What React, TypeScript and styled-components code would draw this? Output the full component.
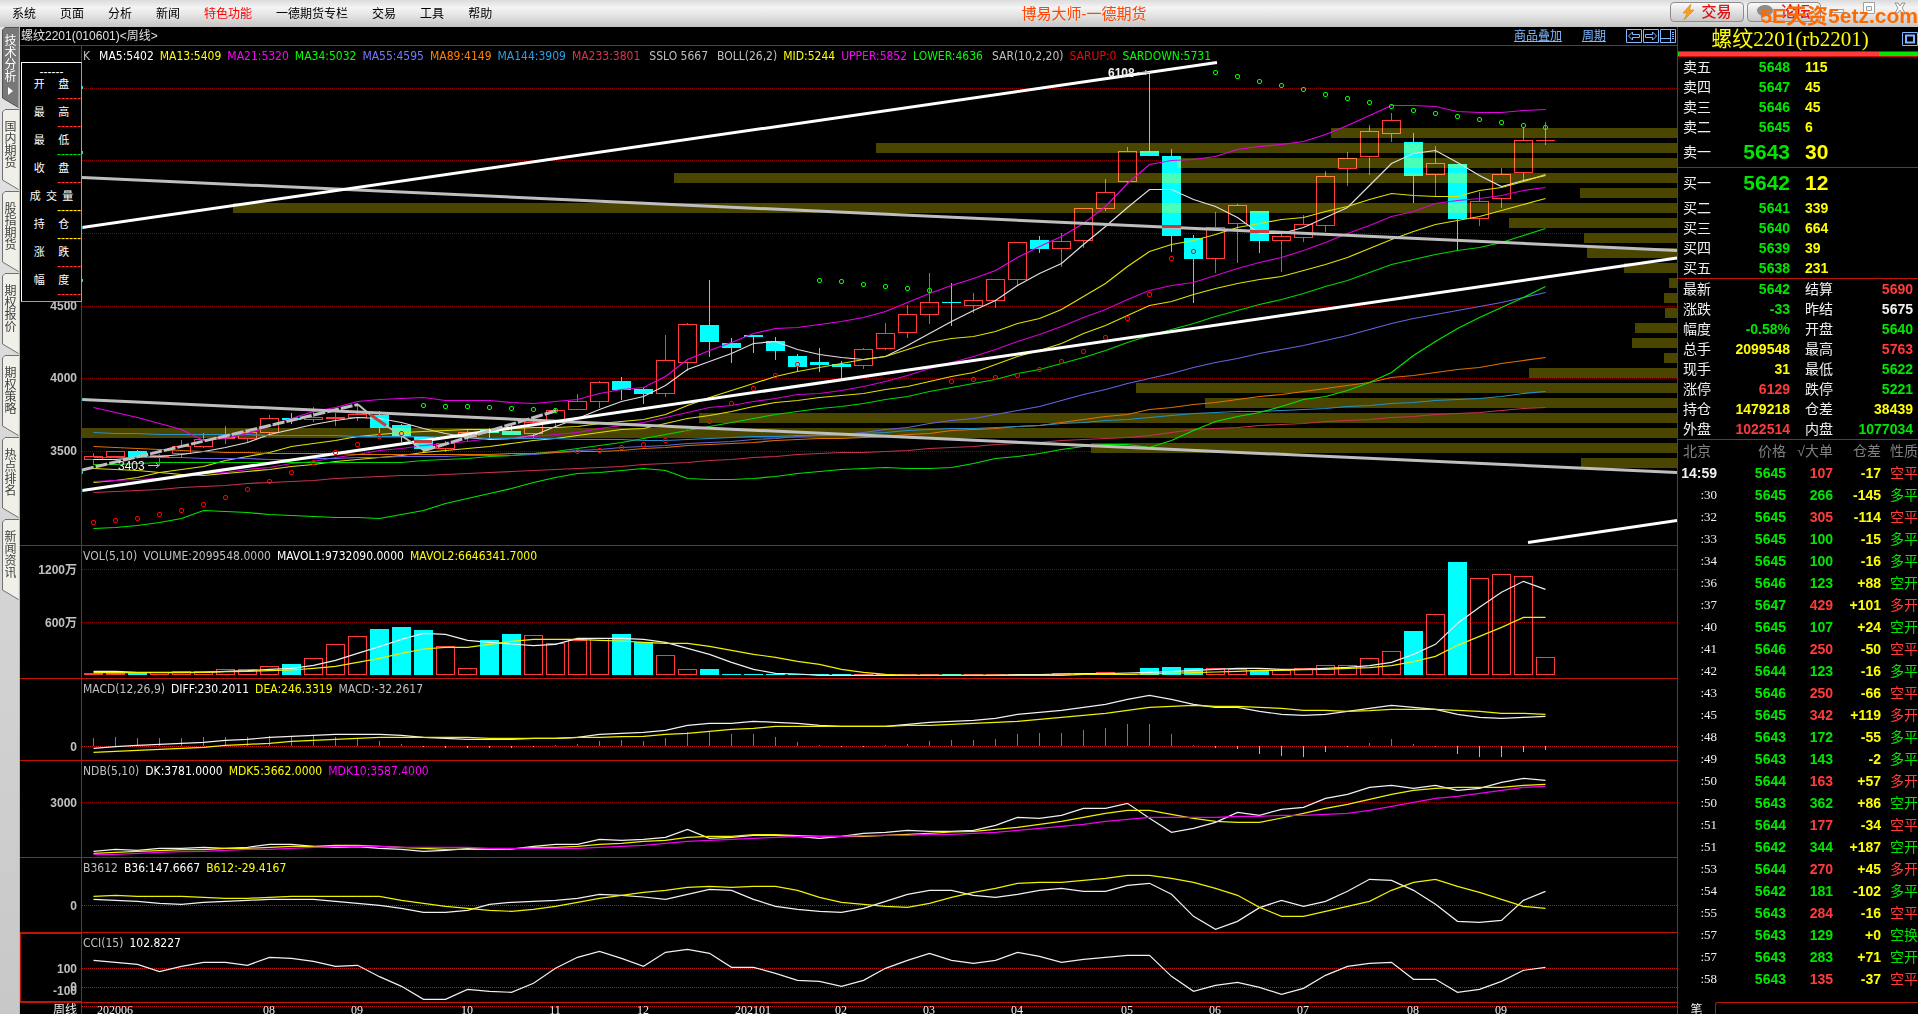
import React from 'react';
import styled, { createGlobalStyle, css } from 'styled-components';

/* ---------- theme ---------- */

const C = {
  frame: '#c01408',
  grid: '#8c0000',
  gridBright: '#c81414',
  red: '#ff3b3b',
  green: '#00e600',
  yellow: '#ffff00',
  cyan: '#00ffff',
  magenta: '#e600e6',
  white: '#f0f0f0',
  grey: '#c0c0c0',
  link: '#7fb8ff',
  band: '#4a4600',
};

const UI_FONT = `'Liberation Sans', 'Noto Sans CJK SC', sans-serif`;
const LEGEND_FONT = `'DejaVu Sans Condensed', 'Noto Sans CJK SC', sans-serif`;
const SONG_FONT = `'Liberation Serif', 'Noto Sans CJK SC', serif`;

const GlobalStyle = createGlobalStyle`
  * { box-sizing: border-box; }
  body {
    margin: 0;
    background: #000;
    color: ${C.white};
    font-family: ${UI_FONT};
    font-size: 12px;
    overflow: hidden;
  }
  button {
    margin: 0;
    padding: 0;
    border: 0;
    background: none;
    font: inherit;
    color: inherit;
    cursor: pointer;
  }
`;

/* ---------- chart data ---------- */

type Candle = [up: number, top: number, bottom: number, high: number, low: number];

const CANDLES: Candle[] = [
  [1, 456, 459, 453, 464], [1, 451, 456, 451, 457], [0, 451, 456, 450, 458], [1, 455, 456, 454, 465],
  [1, 446, 453, 440, 457], [1, 439, 446, 433, 447], [1, 437, 438, 426, 443], [1, 432, 438, 431, 442],
  [1, 418, 432, 415, 434], [0, 418, 419, 413, 424], [1, 417, 419, 407, 421], [1, 417, 418, 413, 425],
  [1, 414, 417, 405, 420], [0, 415, 427, 411, 433], [0, 425, 436, 424, 442], [0, 437, 448, 436, 452],
  [1, 443, 448, 441, 451], [1, 432, 436, 429, 440], [0, 429, 432, 428, 439], [0, 431, 434, 425, 435],
  [1, 422, 433, 420, 437], [1, 410, 421, 408, 426], [1, 401, 409, 394, 409], [1, 382, 401, 381, 407],
  [0, 381, 389, 377, 400], [0, 389, 393, 387, 404], [1, 360, 393, 335, 396], [1, 324, 362, 323, 370],
  [0, 325, 341, 280, 357], [0, 343, 347, 338, 363], [0, 335, 336, 335, 353], [0, 341, 350, 337, 360],
  [0, 356, 366, 354, 371], [0, 362, 364, 348, 372], [0, 364, 366, 361, 381], [1, 349, 365, 348, 368],
  [1, 333, 348, 323, 349], [1, 314, 332, 305, 337], [1, 302, 314, 273, 323], [0, 302, 302, 283, 326],
  [1, 300, 305, 293, 312], [1, 279, 300, 279, 307], [1, 242, 279, 242, 285], [0, 240, 248, 236, 253],
  [1, 241, 248, 233, 266], [1, 208, 240, 208, 247], [1, 192, 208, 179, 210], [1, 151, 181, 147, 182],
  [0, 151, 155, 72, 156], [0, 156, 235, 149, 252], [0, 238, 258, 235, 303], [1, 227, 258, 212, 272],
  [1, 205, 223, 204, 262], [0, 211, 240, 211, 253], [1, 236, 240, 233, 271], [1, 224, 237, 215, 241],
  [1, 176, 225, 171, 231], [1, 158, 168, 152, 185], [1, 131, 156, 125, 174], [1, 120, 133, 113, 141],
  [0, 142, 175, 133, 203], [1, 163, 174, 146, 195], [0, 164, 218, 164, 250], [1, 201, 218, 192, 225],
  [1, 174, 198, 168, 207], [1, 140, 172, 127, 180], [1, 140, 140, 122, 144],
];

const VOLUME_TOPS = nums(
  '673 673 673 672 671 671 669 669 666 664 658 644 636 629 627 630 646 668 640 634 635 643 640 638 634 642 655 669 669 674 674 674 674 674 674 674 674 674 674 674 674 674 674 674 673 673 672 674 668 667 668 668 669 670 670 668 665 665 658 651 631 614 562 578 574 576 657',
);

/* volume profile: [y, left edge], ten units tall each, always reaching the right border */
const BANDS: [number, number][] = [
  [128, 1331], [143, 876], [158, 1177], [173, 674], [188, 1580], [203, 233], [218, 1509], [233, 1584],
  [248, 1587], [263, 1624], [278, 1669], [293, 1664], [308, 1665], [323, 1635], [338, 1632], [353, 1664],
  [368, 1529], [383, 1136], [398, 1205], [413, 699], [428, 82], [443, 1091], [458, 1581],
];

const MAIN_LINES: { color: string; ys: number[] }[] = [
  { color: '#e0e0e0', ys: nums('459 459 457 456 454 451 447 442 434 429 424 420 417 418 422 428 433 437 439 438 435 426 418 409 401 396 385 369 361 353 343 341 349 354 357 359 356 345 333 321 310 300 285 273 263 244 226 207 189 189 199 206 217 233 233 227 217 207 185 163 153 150 162 175 186 180 175') },
  { color: '#e0e000', ys: nums('482 480 477 472 469 466 460 456 452 446 443 440 436 434 432 431 430 429 429 428 427 427 426 423 421 419 414 405 397 390 383 376 371 367 363 359 356 349 342 338 336 331 323 318 309 296 283 266 251 244 240 234 227 223 219 217 211 206 199 193 195 196 196 190 187 181 174') },
  { color: '#d800d8', ys: nums('481 480 479 478 476 473 472 469 467 463 461 457 454 450 448 445 443 441 438 437 436 434 432 428 425 422 417 412 407 405 401 398 394 393 390 386 381 375 368 362 356 349 341 334 326 317 309 299 290 285 282 275 268 262 257 250 242 233 225 216 211 203 200 198 195 190 187') },
  { color: '#e0e000', ys: nums('468 469 470 472 474 475 473 471 469 466 464 461 459 457 455 452 450 448 446 443 440 438 435 432 429 428 423 418 415 411 406 402 400 397 395 393 389 386 381 376 372 364 356 350 343 333 325 315 305 301 294 288 283 279 276 270 264 257 248 239 231 224 220 216 210 204 198') },
  { color: '#00d800', ys: nums('464 464 463 462 462 462 462 462 462 462 462 462 462 462 462 460 459 458 456 455 453 451 448 445 442 438 434 430 426 422 418 414 411 408 406 403 399 396 391 387 383 379 373 369 363 357 350 342 335 329 323 316 310 304 299 293 286 280 272 264 259 254 250 247 242 235 228') },
  { color: '#6464e0', ys: nums('457 457 457 457 457 458 458 458 459 459 458 458 457 457 456 456 456 455 455 455 454 452 450 449 447 446 445 443 442 441 439 438 436 435 434 432 429 427 423 420 418 414 410 406 400 394 389 383 378 373 367 362 358 353 349 345 340 335 329 323 318 314 310 306 302 297 292') },
  { color: '#e07000', ys: nums('446 447 448 449 450 451 452 452 453 453 453 453 454 454 454 454 454 454 454 453 453 452 451 451 450 448 447 445 444 443 442 440 439 438 438 437 436 434 433 430 429 428 426 425 422 419 416 414 409 407 404 402 399 396 394 391 388 385 382 377 375 372 369 367 363 360 357') },
  { color: '#2890c8', ys: nums('432 433 433 434 434 434 434 434 435 435 435 435 436 436 436 436 437 437 438 438 438 438 439 439 439 440 440 439 438 437 436 436 435 435 434 433 432 430 429 428 428 427 426 425 423 422 420 419 417 415 413 412 411 411 410 409 408 406 405 403 402 400 399 398 396 393 391') },
  { color: '#c83250', ys: nums('492 491 490 489 487 486 485 483 482 481 480 478 477 476 475 475 474 473 472 471 470 469 468 467 466 464 463 462 460 459 457 456 454 453 452 452 451 450 448 447 446 444 443 442 440 439 438 437 435 432 429 428 427 425 424 423 421 420 419 417 416 414 413 412 410 408 407') },
  { color: '#e600e6', ys: nums('407 412 417 423 429 440 438 433 426 418 411 407 401 399 398 397 400 400 400 402 403 401 399 393 389 387 376 359 350 342 333 328 327 324 321 317 311 302 293 285 278 270 257 246 236 223 206 183 164 160 159 156 149 146 144 141 134 125 115 105 105 106 111 112 112 110 109') },
  { color: '#00e600', ys: nums('528 527 525 522 518 510 511 512 514 515 516 517 517 518 514 510 503 498 493 488 482 477 473 472 470 468 470 478 479 479 478 476 473 471 469 468 467 468 468 467 463 458 456 453 449 446 444 444 447 440 430 421 416 412 406 399 396 390 382 372 355 341 328 317 307 297 286') },
];

/* SAR: [first bar, colour, heights] */
const SAR: [number, string, number[]][] = [
  [0, '#ff0000', nums('522 520 518 514 510 504 497 489 481 472 462 452 444 436 433')],
  [15, '#00ff00', nums('405 406 406 407 408 409 410')],
  [22, '#ff0000', nums('451 450 447 444 440 431 421 403 388 375 364')],
  [33, '#00ff00', nums('280 281 284 286 288 290')],
  [39, '#ff0000', nums('381 379 377 375 369 361 351 337 318 294 258 251')],
  [51, '#00ff00', nums('72 76 81 85 89 94 98 102 106 110 113 116 119 122 125 127')],
];

const MAVOL = [
  nums('394 394 397 397 397 397 394 392 388 385 376 361 340 320 298 280 283 301 307 312 317 313 295 295 295 298 307 325 343 367 388 400 402 406 406 406 406 406 406 406 406 406 404 404 402 401 401 399 397 395 391 388 385 385 388 388 385 382 377 367 343 313 250 202 157 124 148'),
  nums('398 398 398 398 398 397 395 394 392 390 385 379 367 355 340 327 322 322 313 304 298 298 298 301 303 307 310 310 319 331 343 352 364 373 388 397 403 406 406 406 406 406 406 406 406 403 403 403 402 400 398 396 394 391 391 389 388 385 383 377 365 349 316 289 262 232 232'),
];
const DIFF = nums('625 620 616 613 610 607 601 598 592 589 586 583 583 583 586 592 595 598 598 598 595 595 592 583 580 577 571 556 550 550 544 547 550 556 559 559 559 553 547 544 541 535 523 517 511 502 493 478 466 478 493 502 502 514 523 526 523 514 505 496 502 508 523 532 535 532 529');
const DEA = nums('637 634 631 628 625 622 616 613 610 604 601 598 595 592 592 592 592 592 595 595 595 595 592 592 590 589 583 580 574 568 565 559 559 559 559 559 559 556 556 553 550 547 544 538 532 526 520 511 502 499 496 499 499 502 505 511 511 514 512 508 508 508 511 514 520 520 523');
const HIST = nums('594 591 594 594 594 591 591 591 588 588 588 591 594 603 612 622 624 624 624 624 622 616 612 603 600 603 594 576 574 582 582 591 606 615 622 622 616 612 603 600 600 597 582 579 579 570 564 552 552 582 615 624 627 642 648 651 636 622 609 597 612 617 642 651 651 636 630');
const NDB = [
  nums('934 928 931 925 925 922 925 922 913 913 919 922 920 925 928 934 931 926 928 927 919 913 913 898 901 898 892 868 895 892 886 886 889 895 889 880 877 871 874 874 871 856 832 835 826 805 805 790 835 877 865 847 817 826 808 802 775 763 742 736 745 736 751 745 727 715 721'),
  nums('940 937 934 932 929 929 925 925 922 919 919 916 916 919 922 925 928 928 928 927 922 922 919 913 910 904 901 892 889 889 884 884 887 889 889 889 886 883 880 876 874 868 862 853 844 832 820 811 811 823 835 844 847 847 834 820 805 793 778 763 751 745 742 742 742 736 733'),
  nums('943 943 940 937 935 934 931 928 928 925 922 920 919 919 922 922 922 922 925 925 925 925 925 922 919 916 910 904 901 898 895 892 890 889 889 887 886 886 883 883 880 877 871 865 859 853 844 838 832 832 832 832 829 829 826 826 823 820 811 799 787 775 769 760 751 742 739'),
];
const B3612 = [
  nums('1078 1081 1084 1090 1093 1087 1084 1081 1078 1078 1078 1084 1090 1096 1105 1117 1117 1111 1093 1087 1084 1081 1075 1063 1066 1071 1078 1063 1048 1051 1078 1099 1108 1114 1117 1105 1084 1063 1051 1051 1066 1072 1063 1051 1045 1054 1054 1036 1030 1063 1129 1168 1144 1103 1081 1099 1084 1054 1018 1021 1051 1093 1144 1147 1141 1081 1054'),
  nums('1069 1066 1069 1069 1069 1072 1075 1075 1072 1069 1069 1069 1069 1069 1081 1090 1099 1105 1111 1114 1108 1099 1087 1075 1066 1057 1051 1042 1039 1042 1039 1039 1051 1072 1087 1093 1099 1102 1090 1072 1057 1045 1030 1027 1027 1021 1015 1006 1006 1015 1027 1045 1066 1102 1129 1129 1114 1099 1084 1051 1027 1018 1039 1057 1078 1099 1105'),
];
const CCI = nums('1261 1267 1273 1295 1279 1267 1267 1276 1252 1255 1264 1279 1276 1310 1339 1378 1378 1348 1354 1357 1330 1285 1252 1234 1255 1279 1237 1228 1240 1282 1282 1300 1321 1324 1339 1321 1285 1261 1240 1261 1270 1261 1237 1249 1267 1258 1252 1246 1246 1309 1354 1336 1327 1342 1363 1345 1306 1279 1270 1267 1318 1318 1357 1348 1324 1291 1282');

const DATES: [number, string][] = [
  [1, '202006'], [8, '08'], [12, '09'], [17, '10'], [21, '11'], [25, '12'], [30, '202101'], [34, '02'],
  [38, '03'], [42, '04'], [47, '05'], [51, '06'], [55, '07'], [60, '08'], [64, '09'],
];

/* ---------- chart helpers ---------- */

const LEFT = 82;
const WIDTH = 1595;
const BAR = 22;

function nums(text: string): number[] {
  return text.split(' ').map(Number);
}
const barX = (i: number) => 93 + BAR * i;
const subY = (v: number) => 540 + v / 3;

/* ---------- page frame ---------- */

const Page = styled.div`
  display: flex;
  flex-direction: column;
  height: 100vh;
  overflow: hidden;
`;

const Header = styled.header`
  display: flex;
  align-items: center;
  flex: none;
  height: 27px;
  background: linear-gradient(#dcdcdc, #f4f4f4 28%, #e2e2e2 60%, #c4c4c4);
  color: #000;
`;

const Menu = styled.nav`
  display: flex;
`;

const MenuItem = styled.button<{ $hot?: boolean }>`
  padding: 0 12px;
  line-height: 26px;
  font-size: 12px;
  color: ${(p) => (p.$hot ? '#ff0000' : '#000')};
`;

const AppTitle = styled.h1`
  flex: 1;
  margin: 0;
  padding-right: 6px;
  text-align: center;
  font-size: 15px;
  font-weight: 400;
  line-height: 26px;
  color: #ff4500;
`;

const HeaderTools = styled.div`
  position: relative;
  display: flex;
  align-items: center;
  gap: 3px;
  width: 248px;
  height: 27px;
`;

const PillButton = styled.button`
  display: flex;
  align-items: center;
  justify-content: center;
  gap: 7px;
  width: 74px;
  height: 20px;
  margin-bottom: 3px;
  border: 1px solid #8c8c8c;
  border-radius: 4px;
  background: linear-gradient(#fafafa, #c8c8c8);
  color: #dc1414;
  font-size: 15px;
  font-weight: 500;
  line-height: 18px;
`;

const WindowButton = styled.button`
  display: flex;
  justify-content: center;
  align-items: center;
  width: 28px;
  height: 14px;
  margin-bottom: 12px;
`;

const Watermark = styled.span`
  position: absolute;
  right: 0;
  top: 4px;
  line-height: 24px;
  font-size: 21px;
  font-weight: 700;
  color: #ff6a00;
`;

const Body = styled.div`
  display: flex;
  flex: 1;
  min-height: 0;
`;

/* ---------- side tabs ---------- */

const SideBar = styled.nav`
  display: flex;
  flex-direction: column;
  flex: none;
  gap: 1px;
  width: 20px;
  background: linear-gradient(#e4e4e4, #c8c8c8);
  border-right: 1px solid #b4b4b4;
`;

const SideTab = styled.button<{ $active?: boolean }>`
  display: grid;
  justify-items: center;
  width: 17px;
  height: 81px;
  margin-left: 2px;
  line-height: 12px;
  font-size: 12px;
  color: ${(p) => (p.$active ? '#fff' : '#404040')};
  & > * { grid-area: 1 / 1; }
`;

const TabText = styled.span<{ $active?: boolean }>`
  display: flex;
  flex-direction: column;
  align-items: center;
  width: 12px;
  padding-top: ${(p) => (p.$active ? 8 : 12)}px;
`;

/* ---------- chart column ---------- */

const Charts = styled.main`
  display: grid;
  grid-template-rows: 19px 500fr 133fr 82fr 97fr 75fr 70fr 11px;
  flex: 1;
  min-width: 0;
  position: relative;
`;

const ChartTitle = styled.div`
  display: flex;
  align-items: center;
  gap: 20px;
  padding: 0 1px;
  border-bottom: 1px solid ${C.frame};
  line-height: 18px;
`;

const Instrument = styled.h2`
  flex: 1;
  margin: 0;
  font-size: 12px;
  font-weight: 400;
  color: #e0e0e0;
`;

const ChartLink = styled.a`
  color: ${C.link};
  text-decoration: underline;
`;

const IconRow = styled.span`
  display: flex;
  gap: 1px;
`;

const IconButton = styled.button`
  display: flex;
  width: 16px;
  height: 14px;
`;

const Panel = styled.section`
  display: grid;
  grid-template-columns: 62px 1fr;
  grid-template-rows: minmax(0, 1fr);
  min-height: 0;
  border-bottom: 1px solid ${C.frame};
`;

const Axis = styled.div<{ $selected?: boolean }>`
  min-height: 0;
  border-right: 1px solid ${C.frame};
  ${(p) =>
    p.$selected &&
    css`
      outline: 1px solid ${C.frame};
      outline-offset: -1px;
    `}
`;

const AxisSvg = styled.svg`
  display: block;
  width: 61px;
  height: 100%;
  text {
    font: 700 12px ${UI_FONT};
    fill: ${C.grey};
    text-anchor: end;
    dominant-baseline: central;
  }
`;

const Plot = styled.div`
  display: grid;
  grid-template-rows: minmax(0, 1fr);
  min-height: 0;
  & > * { grid-area: 1 / 1; }
`;

const PlotSvg = styled.svg`
  display: block;
  width: 100%;
  height: 100%;
`;

const Legend = styled.div`
  display: flex;
  align-self: start;
  gap: 6px;
  padding: 2px 0 0 1px;
  font-family: ${LEGEND_FONT};
  font-size: 12px;
  line-height: 16px;
  white-space: pre;
  z-index: 1;
`;

const Value = styled.span<{ $color: string; $lead?: number }>`
  color: ${(p) => p.$color};
  margin-left: ${(p) => p.$lead ?? 0}px;
`;

const TimeAxis = styled.div`
  display: grid;
  grid-template-columns: 62px 1fr;
  line-height: 14px;
  overflow: hidden;
`;

const Period = styled.span`
  padding-right: 4px;
  border-right: 1px solid ${C.frame};
  text-align: right;
  line-height: 14px;
`;

const DateRow = styled.div`
  display: grid;
  grid-template-columns: repeat(145, 1fr);
  font-family: ${SONG_FONT};
  text-align: center;
  background: repeating-linear-gradient(90deg, ${C.gridBright} 0 1px, #000 1px 2px) 0 3px / 100% 1px no-repeat;
`;

const DateMark = styled.span<{ $bar: number }>`
  grid-row: 1;
  grid-column: ${(p) => `${p.$bar * 2} / ${p.$bar * 2 + 4}`};
`;

/* floating readout over the axis */
const Readout = styled.aside`
  position: absolute;
  left: 1px;
  top: 35px;
  width: 61px;
  height: 240px;
  padding-top: 2px;
  border: 1px solid #fff;
  border-right-color: #a0a0a0;
  border-bottom-color: #a0a0a0;
  background: #000;
  z-index: 2;
`;

const ReadoutRow = styled.div`
  height: 28px;
`;

const ReadoutLabel = styled.div`
  display: flex;
  justify-content: space-around;
  padding: 0 5px;
  font-size: 11px;
  line-height: 15px;
  color: #fff;
`;

const ReadoutDash = styled.div<{ $color: string; $mid?: boolean }>`
  font-size: 12px;
  line-height: ${(p) => (p.$mid ? 14 : 13)}px;
  height: ${(p) => (p.$mid ? 12 : 13)}px;
  text-align: ${(p) => (p.$mid ? 'center' : 'right')};
  color: ${(p) => p.$color};
`;

/* ---------- quote column ---------- */

const Quote = styled.aside`
  display: flex;
  flex-direction: column;
  flex: none;
  width: 241px;
  border-left: 1px solid ${C.frame};
`;

const QuoteTitle = styled.div`
  display: flex;
  align-items: center;
  height: 24px;
  h2 {
    flex: 1;
    margin: 0;
    text-align: center;
    font: 400 21px/24px ${SONG_FONT};
    color: ${C.yellow};
  }
`;

const Ratio = styled.div`
  display: grid;
  grid-template-columns: 200fr 39fr;
  height: 6px;
  padding-left: 1px;
  border-top: 1px solid ${C.frame};
  border-bottom: 1px solid ${C.frame};
  background: ${C.green};
  &::before {
    content: '';
    background: ${C.red};
  }
`;

const Block = styled.div`
  border-bottom: 1px solid ${C.frame};
`;

const QuoteRow = styled.div<{ $big?: boolean }>`
  display: grid;
  grid-template-columns: 28px 79px 43px 1fr;
  align-items: center;
  height: ${(p) => (p.$big ? 30 : 20)}px;
  padding: 0 5px;
  font-size: 14px;
  line-height: 20px;
  white-space: nowrap;
  b {
    font-size: ${(p) => (p.$big ? 21 : 14)}px;
  }
`;

const Num = styled.b<{ $color: string; $left?: boolean }>`
  color: ${(p) => p.$color};
  text-align: ${(p) => (p.$left ? 'left' : 'right')};
  padding-left: ${(p) => (p.$left ? 15 : 0)}px;
`;

const SecondLabel = styled.span`
  padding-left: 15px;
`;

const Ticks = styled.table`
  width: 100%;
  border-collapse: collapse;
  table-layout: fixed;
  font-size: 14px;
  line-height: 22px;
  white-space: nowrap;
  th, td {
    height: 22px;
    padding: 0;
    text-align: right;
  }
  th {
    font-weight: 400;
    color: #808080;
  }
  th:first-child {
    padding-left: 5px;
    text-align: left;
  }
  th:last-child, td:last-child {
    padding-left: 9px;
    text-align: left;
  }
`;

const Col = styled.col<{ $w: number }>`
  width: ${(p) => p.$w}px;
`;

const TickTime = styled.td<{ $full?: boolean }>`
  font-family: ${(p) => (p.$full ? UI_FONT : SONG_FONT)};
  font-weight: ${(p) => (p.$full ? 700 : 400)};
  font-size: ${(p) => (p.$full ? 14 : 13)}px;
`;

const TickCell = styled.td<{ $color: string; $bold?: boolean }>`
  color: ${(p) => p.$color};
  font-weight: ${(p) => (p.$bold ? 700 : 400)};
`;

const QuoteFoot = styled.div`
  display: grid;
  grid-template-columns: 37px 1fr;
  height: 12px;
  margin-top: auto;
  overflow: hidden;
  line-height: 16px;
  text-align: center;
`;

const FootTab = styled.div`
  border: 1px solid ${C.frame};
  border-width: 1px 0 0 1px;
  border-top-left-radius: 3px;
`;

/* ---------- chart drawing ---------- */

const Grid = ({ ys, color = C.grid }: { ys: number[]; color?: string }) => (
  <g stroke={color} strokeDasharray="1 1" shapeRendering="crispEdges">
    {ys.map((y) => (
      <line key={y} x1={LEFT} x2={LEFT + WIDTH} y1={y + 0.5} y2={y + 0.5} />
    ))}
  </g>
);

const Series = ({ ys, color }: { ys: number[]; color: string }) => (
  <polyline points={ys.map((y, i) => `${barX(i) + 0.5},${y}`).join(' ')} fill="none" stroke={color} strokeWidth="1.2" />
);

const Bands = ({ fill, clip }: { fill: string; clip?: string }) => (
  <g fill={fill} clipPath={clip}>
    {BANDS.map(([y, x]) => (
      <rect key={y} x={x} y={y} width={LEFT + WIDTH - x} height="10" />
    ))}
  </g>
);

const MainChart = () => {
  const indexed = CANDLES.map((c, i) => ({ c, x: barX(i) }));
  const falling = indexed.filter(({ c }) => !c[0]);
  const rising = indexed.filter(({ c }) => c[0]);
  return (
    <PlotSvg viewBox={`${LEFT} 46 ${WIDTH} 499`} preserveAspectRatio="none" role="img" aria-label="周线 K">
      <defs>
        <clipPath id="falling">
          {falling.map(({ c, x }) => (
            <rect key={x} x={x - 9} y={c[1]} width="19" height={c[2] - c[1] + 1} />
          ))}
        </clipPath>
      </defs>
      <Grid ys={[88, 160, 233, 306, 378, 451]} />
      <Bands fill={C.band} />
      <g stroke={C.red} fill="none" shapeRendering="crispEdges" style={{ mixBlendMode: 'plus-lighter' }}>
        {rising.map(({ c, x }) => (
          <React.Fragment key={x}>
            {c[2] > c[1] ? (
              <rect x={x - 8.5} y={c[1] + 0.5} width="18" height={c[2] - c[1]} />
            ) : (
              <path d={`M${x - 9} ${c[1] + 0.5}h19`} />
            )}
            <path d={`M${x + 0.5} ${c[3]}V${c[1]}M${x + 0.5} ${c[2] + 1}V${c[4] + 1}`} />
          </React.Fragment>
        ))}
      </g>
      <g fill={C.cyan} shapeRendering="crispEdges">
        {falling.map(({ c, x }) => (
          <React.Fragment key={x}>
            <rect x={x - 9} y={c[1]} width="19" height={c[2] - c[1] + 1} />
            <rect x={x} y={c[3]} width="1" height={c[4] - c[3]} />
          </React.Fragment>
        ))}
      </g>
      <Bands fill="#4affb9" clip="url(#falling)" />
      <g transform="translate(0 0.5)">
        {MAIN_LINES.map((l, i) => (
          <Series key={i} ys={l.ys} color={l.color} />
        ))}
      </g>
      <g fill="none" strokeWidth="3">
        <path stroke="#bebebe" d="M82 177.5L1677 250.5M82 399.5L1677 472.5" />
        <path stroke="#fff" d="M82 227.5L1217 62.5M82 490.5L1677 258M1528 542.5L1677 520.5" />
        <path stroke="#bebebe" d="M82 470L358 404.5M424 450.5L557 410.5" strokeDasharray="12 2" />
        <path stroke="#c83c3c" d="M1162 226.500H1181M1250 231.500H1269M370 414.500L386 425.500M414 441.500H432" />
        <path stroke="#bebebe" strokeWidth="2" d="M358 404.500L370 414.500M386 425.500L424 450.500" />
      </g>
      <g fill="none">
        {SAR.map(([first, color, ys]) =>
          ys.map((y, i) => (
            <rect key={`${first}-${i}`} x={barX(first + i) - 1.5} y={y - 1.5} width="4" height="4" rx="1.5" stroke={color} />
          )),
        )}
      </g>
      <g fill="#40c8c8">
        {[87, 152, 227, 280, 399, 472, 490].map((y) => (
          <rect key={y} x="82" y={y - 1} width="1" height="3" />
        ))}
      </g>
      <g fill={C.white} fontFamily="Liberation Sans, sans-serif" fontSize="12" fontWeight="700">
        <text x="1108" y="77">6108</text>
        <text x="118" y="470" fontWeight="400">3403</text>
      </g>
      <path d="M1137 72.500H1150M1145 70L1148 72.500L1145 75M148 465.500H159M156 463L159 465.500L156 468" stroke={C.grey} fill="none" />
    </PlotSvg>
  );
};

const SubSvg = ({ top, height, label, children }: { top: number; height: number; label: string; children: React.ReactNode }) => (
  <PlotSvg viewBox={`${LEFT} ${top} ${WIDTH} ${height}`} preserveAspectRatio="none" role="img" aria-label={label}>
    {children}
  </PlotSvg>
);

const VolumeChart = () => (
  <SubSvg top={546} height={132} label="VOL">
    <Grid ys={[569, 622]} />
    <g shapeRendering="crispEdges">
      {VOLUME_TOPS.map((top, i) =>
        CANDLES[i][0] && top < 674 ? (
          <rect key={i} x={barX(i) - 8.5} y={top + 0.5} width="18" height={674 - top} fill="none" stroke={C.red} />
        ) : (
          <rect key={i} x={barX(i) - 9} y={top} width="19" height={675 - top} fill={CANDLES[i][0] ? C.red : C.cyan} />
        ),
      )}
    </g>
    <Series ys={MAVOL[0].map(subY)} color="#f0f0f0" />
    <Series ys={MAVOL[1].map(subY)} color="#f0f000" />
  </SubSvg>
);

const MacdChart = () => (
  <SubSvg top={679} height={81} label="MACD">
    <Grid ys={[746]} color={C.gridBright} />
    <g shapeRendering="crispEdges">
      {HIST.map((v, i) => {
        const y = Math.round(subY(v));
        return (
          <rect
            key={i}
            x={barX(i)}
            y={Math.min(y, 746)}
            width="1"
            height={Math.max(1, Math.abs(746 - y))}
            fill={v < 619 ? C.red : C.cyan}
          />
        );
      })}
    </g>
    <Series ys={DIFF.map(subY)} color="#f0f0f0" />
    <Series ys={DEA.map(subY)} color="#f0f000" />
  </SubSvg>
);

const Ticker = ({ top, height, marks }: { top: number; height: number; marks: [number, string][] }) => (
  <AxisSvg>
    {marks.map(([y, text]) => (
      <text key={text} x="57" y={`${((y - top) / height) * 100}%`}>
        {text}
      </text>
    ))}
  </AxisSvg>
);

const LegendRow = ({ items }: { items: [string, string, number?][] }) => (
  <Legend>
    {items.map(([text, color, lead]) => (
      <Value key={text} $color={color} $lead={lead}>
        {text}
      </Value>
    ))}
  </Legend>
);

/* ---------- quote data ---------- */

const ASKS = [['卖五', '5648', '115'], ['卖四', '5647', '45'], ['卖三', '5646', '45'], ['卖二', '5645', '6'], ['卖一', '5643', '30']];
const BIDS = [['买一', '5642', '12'], ['买二', '5641', '339'], ['买三', '5640', '664'], ['买四', '5639', '39'], ['买五', '5638', '231']];

const STATS: [string, string, string, string, string, string][] = [
  ['最新', '5642', C.green, '结算', '5690', C.red],
  ['涨跌', '-33', C.green, '昨结', '5675', C.white],
  ['幅度', '-0.58%', C.green, '开盘', '5640', C.green],
  ['总手', '2099548', C.yellow, '最高', '5763', C.red],
  ['现手', '31', C.yellow, '最低', '5622', C.green],
  ['涨停', '6129', C.red, '跌停', '5221', C.green],
  ['持仓', '1479218', C.yellow, '仓差', '38439', C.yellow],
  ['外盘', '1022514', C.red, '内盘', '1077034', C.green],
];

const TICKS: [string, string, string, string, string, boolean][] = [
  ['14:59', '5645', '107', '-17', '空平', true],
  [':30', '5645', '266', '-145', '多平', false],
  [':32', '5645', '305', '-114', '空平', true],
  [':33', '5645', '100', '-15', '多平', false],
  [':34', '5645', '100', '-16', '多平', false],
  [':36', '5646', '123', '+88', '空开', false],
  [':37', '5647', '429', '+101', '多开', true],
  [':40', '5645', '107', '+24', '空开', false],
  [':41', '5646', '250', '-50', '空平', true],
  [':42', '5644', '123', '-16', '多平', false],
  [':43', '5646', '250', '-66', '空平', true],
  [':45', '5645', '342', '+119', '多开', true],
  [':48', '5643', '172', '-55', '多平', false],
  [':49', '5643', '143', '-2', '多平', false],
  [':50', '5644', '163', '+57', '多开', true],
  [':50', '5643', '362', '+86', '空开', false],
  [':51', '5644', '177', '-34', '空平', true],
  [':51', '5642', '344', '+187', '空开', false],
  [':53', '5644', '270', '+45', '多开', true],
  [':54', '5642', '181', '-102', '多平', false],
  [':55', '5643', '284', '-16', '空平', true],
  [':57', '5643', '129', '+0', '空换', false],
  [':57', '5643', '283', '+71', '空开', false],
  [':58', '5643', '135', '-37', '空平', true],
];

const MENU = ['系统', '页面', '分析', '新闻', '特色功能', '一德期货专栏', '交易', '工具', '帮助'];
const TABS = ['技术分析', '国内期货', '股指期货', '期权报价', '期权策略', '热点排名', '新闻资讯'];
const READOUT: [string, string][] = [
  ['开盘', C.red], ['最高', C.red], ['最低', C.green], ['收盘', C.red],
  ['成交量', C.yellow], ['持仓', C.yellow], ['涨跌', C.red], ['幅度', C.red],
];

const BookRow = ({ row, big }: { row: string[]; big: boolean }) => (
  <QuoteRow $big={big}>
    <span>{row[0]}</span>
    <Num $color={C.green}>{row[1]}</Num>
    <Num $color={C.yellow} $left>{row[2]}</Num>
  </QuoteRow>
);

const TabShape = ({ active }: { active: boolean }) => (
  <svg width="17" height="81" viewBox="0 0 17 81" aria-hidden="true">
    <path
      d="M17 0.500H3L0.500 3V71L16.500 80.500"
      fill={active ? '#787878' : '#f0f0e8'}
      stroke={active ? '#505050' : '#707070'}
    />
  </svg>
);

export default function App() {
  return (
    <Page>
      <GlobalStyle />
      <Header>
        <Menu>
          {MENU.map((m) => (
            <MenuItem key={m} $hot={m === '特色功能'}>{m}</MenuItem>
          ))}
        </Menu>
        <AppTitle>博易大师-一德期货</AppTitle>
        <HeaderTools>
          <PillButton>
            <svg width="12" height="16" viewBox="0 0 12 16" aria-hidden="true">
              <path d="M9 0L1 9H5L2 16L12 6H7.500Z" fill="#f5a020" stroke="#c87814" strokeWidth="0.500" />
            </svg>
            交易
          </PillButton>
          <PillButton>
            <svg width="16" height="14" viewBox="0 0 16 14" aria-hidden="true">
              <path d="M8 0C12.500 0 16 2.500 16 5.500S12.500 11 8 11L4 14V10.500C1.500 9.500 0 7.500 0 5.500C0 2.500 3.500 0 8 0Z" fill="#8c8c8c" />
            </svg>
            论坛
          </PillButton>
          <WindowButton aria-label="最小化">
            <svg width="14" height="12" viewBox="0 0 14 12">
              <rect x="1.500" y="7.500" width="11" height="3" fill="#fff" stroke="#a0a0a0" />
            </svg>
          </WindowButton>
          <WindowButton aria-label="最大化">
            <svg width="12" height="12" viewBox="0 0 12 12">
              <path d="M0.500 0.500H11.500V11.500H0.500ZM3.500 4.500V8.500H8.500V4.500Z" fill="#fff" fillRule="evenodd" stroke="#a0a0a0" />
            </svg>
          </WindowButton>
          <WindowButton aria-label="关闭">
            <svg width="12" height="12" viewBox="0 0 12 12">
              <path d="M1 1H4L6 4L8 1H11L8 6L11 11H8L6 8L4 11H1L4 6Z" fill="#fff" stroke="#909090" />
            </svg>
          </WindowButton>
          <Watermark>5E天资5etz.com</Watermark>
        </HeaderTools>
      </Header>

      <Body>
        <SideBar>
          {TABS.map((t, i) => (
            <SideTab key={t} $active={i === 0}>
              <TabShape active={i === 0} />
              <TabText $active={i === 0}>
                {[...t].map((ch, k) => (
                  <span key={k}>{ch}</span>
                ))}
                {i === 0 && (
                  <svg width="5" height="16" viewBox="0 0 5 16" aria-hidden="true">
                    <path d="M0 4V12L5 8Z" fill="#fff" />
                  </svg>
                )}
              </TabText>
            </SideTab>
          ))}
        </SideBar>

        <Charts>
          <ChartTitle>
            <Instrument>螺纹2201(010601)&lt;周线&gt;</Instrument>
            <ChartLink href="#overlay">商品叠加</ChartLink>
            <ChartLink href="#period">周期</ChartLink>
            <IconRow>
              <IconButton aria-label="向左">
                <svg width="16" height="14" viewBox="0 0 16 14" fill="none" stroke={C.link}>
                  <path d="M0.500 0.500H15.500V13.500H0.500ZM2.500 7L6.500 3V5.500H13.500V8.500H6.500V11Z" />
                </svg>
              </IconButton>
              <IconButton aria-label="向右">
                <svg width="16" height="14" viewBox="0 0 16 14" fill="none" stroke={C.link}>
                  <path d="M0.500 0.500H15.500V13.500H0.500ZM13.500 7L9.500 3V5.500H2.500V8.500H9.500V11Z" />
                </svg>
              </IconButton>
              <IconButton aria-label="布局">
                <svg width="16" height="14" viewBox="0 0 16 14" fill="none" stroke={C.link}>
                  <path d="M0.500 0.500H15.500V13.500H0.500ZM10.500 0V14M0 9.500H10M12 3.500H14M12 5.500H14M12 7.500H14M12 9.500H14" />
                </svg>
              </IconButton>
            </IconRow>
          </ChartTitle>

          <Panel>
            <Axis>
              <Ticker top={46} height={499} marks={[[306, '4500'], [378, '4000'], [451, '3500']]} />
            </Axis>
            <Plot>
              <LegendRow
                items={[
                  ['K', C.grey], ['MA5:5402', '#fff', 3], ['MA13:5409', C.yellow], ['MA21:5320', '#ff00ff'],
                  ['MA34:5032', '#00ff00'], ['MA55:4595', '#7878ff'], ['MA89:4149', '#ff8000'], ['MA144:3909', '#28a0e6'],
                  ['MA233:3801', '#dc3250'], ['SSLO 5667', C.grey, 3], ['BOLL(26,2)', C.grey, 3], ['MID:5244', C.yellow],
                  ['UPPER:5852', '#ff00ff'], ['LOWER:4636', '#00ff00'], ['SAR(10,2,20)', C.grey, 3], ['SARUP:0', '#ff0000'],
                  ['SARDOWN:5731', '#00ff00'],
                ]}
              />
              <MainChart />
            </Plot>
          </Panel>

          <Panel>
            <Axis>
              <Ticker top={546} height={132} marks={[[570, '1200万'], [623, '600万']]} />
            </Axis>
            <Plot>
              <LegendRow items={[['VOL(5,10)', C.grey], ['VOLUME:2099548.0000', C.grey], ['MAVOL1:9732090.0000', '#fff'], ['MAVOL2:6646341.7000', C.yellow]]} />
              <VolumeChart />
            </Plot>
          </Panel>

          <Panel>
            <Axis>
              <Ticker top={679} height={81} marks={[[747, '0']]} />
            </Axis>
            <Plot>
              <LegendRow items={[['MACD(12,26,9)', C.grey], ['DIFF:230.2011', '#fff'], ['DEA:246.3319', C.yellow], ['MACD:-32.2617', C.grey]]} />
              <MacdChart />
            </Plot>
          </Panel>

          <Panel>
            <Axis>
              <Ticker top={761} height={96} marks={[[803, '3000']]} />
            </Axis>
            <Plot>
              <LegendRow items={[['NDB(5,10)', C.grey], ['DK:3781.0000', '#fff'], ['MDK5:3662.0000', C.yellow], ['MDK10:3587.4000', '#ff00ff']]} />
              <SubSvg top={761} height={96} label="NDB">
                <Grid ys={[802]} />
                <Series ys={NDB[0].map(subY)} color="#f0f0f0" />
                <Series ys={NDB[1].map(subY)} color="#f0f000" />
                <Series ys={NDB[2].map(subY)} color="#f000f0" />
              </SubSvg>
            </Plot>
          </Panel>

          <Panel>
            <Axis>
              <Ticker top={858} height={74} marks={[[906, '0']]} />
            </Axis>
            <Plot>
              <LegendRow items={[['B3612', C.grey], ['B36:147.6667', '#fff'], ['B612:-29.4167', C.yellow]]} />
              <SubSvg top={858} height={74} label="B3612">
                <Grid ys={[905]} color={C.gridBright} />
                <Series ys={B3612[0].map(subY)} color="#f0f0f0" />
                <Series ys={B3612[1].map(subY)} color="#f0f000" />
              </SubSvg>
            </Plot>
          </Panel>

          <Panel>
            <Axis $selected>
              <Ticker top={933} height={69} marks={[[969, '100'], [987, '0'], [991, '-100']]} />
            </Axis>
            <Plot>
              <LegendRow items={[['CCI(15)', C.grey], ['102.8227', '#fff']]} />
              <SubSvg top={933} height={69} label="CCI">
                <Grid ys={[968, 987]} color={C.gridBright} />
                <Series ys={CCI.map(subY)} color="#f0f0f0" />
              </SubSvg>
            </Plot>
          </Panel>

          <TimeAxis>
            <Period>周线</Period>
            <DateRow>
              {DATES.map(([bar, text]) => (
                <DateMark key={`${bar}`} $bar={bar}>{text}</DateMark>
              ))}
            </DateRow>
          </TimeAxis>

          <Readout>
            <ReadoutDash $color="#fff" $mid>------</ReadoutDash>
            {READOUT.map(([label, color]) => (
              <ReadoutRow key={label}>
                <ReadoutLabel>
                  {[...label].map((ch, k) => (
                    <span key={k}>{ch}</span>
                  ))}
                </ReadoutLabel>
                <ReadoutDash $color={color}>------</ReadoutDash>
              </ReadoutRow>
            ))}
          </Readout>
        </Charts>

        <Quote>
          <QuoteTitle>
            <h2>螺纹2201(rb2201)</h2>
            <IconButton aria-label="窗口">
              <svg width="16" height="14" viewBox="0 0 16 14" fill="none" stroke={C.link}>
                <path d="M0.500 0.500H15.500V13.500H0.500Z" />
                <path d="M4 3.500H12V10.500H4Z" strokeWidth="2" />
              </svg>
            </IconButton>
          </QuoteTitle>
          <Ratio />
          <Block>
            {ASKS.map((r, i) => (
              <BookRow key={r[0]} row={r} big={i === 4} />
            ))}
          </Block>
          <Block>
            {BIDS.map((r, i) => (
              <BookRow key={r[0]} row={r} big={i === 0} />
            ))}
          </Block>
          <Block>
            {STATS.map(([l1, v1, c1, l2, v2, c2]) => (
              <QuoteRow key={l1}>
                <span>{l1}</span>
                <Num $color={c1}>{v1}</Num>
                <SecondLabel>{l2}</SecondLabel>
                <Num $color={c2}>{v2}</Num>
              </QuoteRow>
            ))}
          </Block>
          <Ticks>
            <colgroup>
              <Col $w={39} />
              <Col $w={69} />
              <Col $w={47} />
              <Col $w={48} />
              <Col $w={37} />
            </colgroup>
            <thead>
              <tr>
                <th>北京</th>
                <th>价格</th>
                <th>√大单</th>
                <th>仓差</th>
                <th>性质</th>
              </tr>
            </thead>
            <tbody>
              {TICKS.map(([time, price, vol, diff, kind, up], i) => (
                <tr key={i}>
                  <TickTime $full={i === 0}>{time}</TickTime>
                  <TickCell $color={C.green} $bold>{price}</TickCell>
                  <TickCell $color={up ? C.red : C.green} $bold>{vol}</TickCell>
                  <TickCell $color={C.yellow} $bold>{diff}</TickCell>
                  <TickCell $color={up ? C.red : C.green}>{kind}</TickCell>
                </tr>
              ))}
            </tbody>
          </Ticks>
          <QuoteFoot>
            <span>笔</span>
            <FootTab />
          </QuoteFoot>
        </Quote>
      </Body>
    </Page>
  );
}
